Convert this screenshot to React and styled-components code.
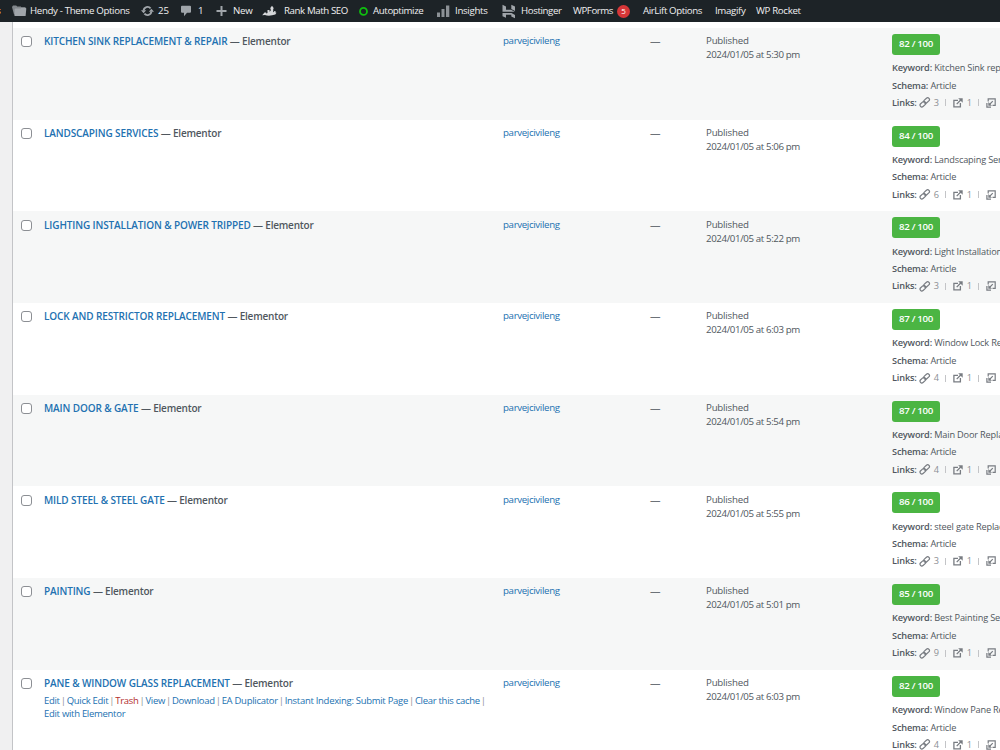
import React from 'react'
import styled, { createGlobalStyle } from 'styled-components'

const MENU = [
  { icon: 'folder', slot: 18, width: 129, text: 'Hendy - Theme Options' },
  { icon: 'update', slot: 17, width: 39, text: '25', ls: -0.1 },
  { icon: 'comment', slot: 18, width: 36, text: '1' },
  { icon: 'plus', slot: 17, width: 46, text: 'New', ls: -0.2 },
  { icon: 'rank', slot: 22, width: 97, text: 'Rank Math SEO', ls: -0.4 },
  { icon: 'circle', slot: 14, width: 78, text: 'Autoptimize', ls: -0.38 },
  { icon: 'bars', slot: 18, width: 65, text: 'Insights', ls: -0.3 },
  { icon: 'hostinger', slot: 19, width: 71, text: 'Hostinger', ls: -0.4 },
  { width: 70, text: 'WPForms', badge: '5', ls: -0.45 },
  { width: 72, text: 'AirLift Options', ls: -0.4 },
  { width: 41, text: 'Imagify', ls: -0.35 },
  { width: 60, text: 'WP Rocket', ls: -0.35 }
]

const PAGES = [
  { title: 'KITCHEN SINK REPLACEMENT & REPAIR', time: '5:30', score: 82, keyword: 'Kitchen Sink replacement', links: 3 },
  { title: 'LANDSCAPING SERVICES', time: '5:06', score: 84, keyword: 'Landscaping Services', links: 6 },
  { title: 'LIGHTING INSTALLATION & POWER TRIPPED', time: '5:22', score: 82, keyword: 'Light Installation', links: 3 },
  { title: 'LOCK AND RESTRICTOR REPLACEMENT', time: '6:03', score: 87, keyword: 'Window Lock Replacement', links: 4 },
  { title: 'MAIN DOOR & GATE', time: '5:54', score: 87, keyword: 'Main Door Replacement', links: 4 },
  { title: 'MILD STEEL & STEEL GATE', time: '5:55', score: 86, keyword: 'steel gate Replacement', links: 3 },
  { title: 'PAINTING', time: '5:01', score: 85, keyword: 'Best Painting Services', links: 9 },
  { title: 'PANE & WINDOW GLASS REPLACEMENT', time: '6:03', score: 82, keyword: 'Window Pane Replacement', links: 4, actions: true }
]

const ACTIONS = ['Edit', 'Quick Edit', 'Trash', 'View', 'Download', 'EA Duplicator', 'Instant Indexing: Submit Page', 'Clear this cache', 'Edit with Elementor']

const MenuIcon = ({ name }) => {
  if (name === 'folder') {
    return (
      <svg width="15" height="12" viewBox="0 0 15 12">
        <path d="M0 2 1 .6h3.200l1 1h3.600l.7.8h3.600v3L4 9.500H2z" fill="#82878c" />
        <path d="M2.600 4.600 3.400 3.400h5.200l.8-.8h4l.9 1L13.600 11H2.500z" fill="#a0a5aa" />
      </svg>
    )
  }
  if (name === 'update') {
    return (
      <svg width="13" height="12" viewBox="0 0 13 12" fill="none" stroke="#a0a5aa" strokeWidth="1.9">
        <path d="M2.600 5.500A4 4 0 0 1 9.600 3.300M10.400 6.500A4 4 0 0 1 3.400 8.700" />
        <path d="M0 5.200h5.200L2.600 8.200zM7.800 6.800h5.200l-2.600-3z" fill="#a0a5aa" stroke="none" />
      </svg>
    )
  }
  if (name === 'comment') {
    return (
      <svg width="12" height="12" viewBox="0 0 12 12" fill="#a0a5aa">
        <path d="M2 .8h8q1 0 1 1v5q0 1-1 1H7L4 11.3V7.8H2q-1 0-1-1v-5q0-1 1-1z" />
      </svg>
    )
  }
  if (name === 'plus') {
    return (
      <svg width="12" height="12" viewBox="0 0 12 12" stroke="#a0a5aa" strokeWidth="2">
        <path d="M5.500 1v10M.5 6h10" />
      </svg>
    )
  }
  if (name === 'rank') {
    return (
      <svg width="15" height="12" viewBox="0 0 15 12" fill="#d5d7d9">
        <path d="M.2 10.300 2.500 7.500h1.700v1l1.300-.6V5h2v1.800l1.200-1V3.400H7.900L10 .8l2 2.600h-.8v3.800l1-.4v-.9h1.300v1.700l1 .2-1.200 1.800c-3.500 1.300-8 1.500-10.300.5z" />
      </svg>
    )
  }
  if (name === 'circle') {
    return (
      <svg width="10" height="12" viewBox="0 0 10 12" fill="none" stroke="#0fbe0f" strokeWidth="1.8">
        <circle cx="4.500" cy="6.400" r="3.500" />
      </svg>
    )
  }
  if (name === 'bars') {
    return (
      <svg width="13" height="13" viewBox="0 0 13 13" fill="#8c9196">
        <path d="M0 7.500h3V12H0zM4.500 4h3v8h-3zM9 0.500h3.300V12H9z" />
      </svg>
    )
  }
  return (
    <svg width="14" height="15" viewBox="0 0 14 15" fill="#a0a5aa">
      <path d="M.5 0.700 4 2.600v3.200h5l3.800 2H.5zM9.300.700l3.700 1.900V7L9.300 5zM.5 9h9l3.500 2v3.300l-3.700-1.900v-1.600H4v3L.5 12.300z" />
    </svg>
  )
}

const ChainIcon = () => (
  <svg width="12" height="11" viewBox="0 0 12 11" fill="none" stroke="#787c82" strokeWidth="1.200">
    <rect x="4.400" y="1.700" width="6.400" height="3.600" rx="1.800" transform="rotate(-42 7.600 3.500)" />
    <rect x="0.700" y="5.400" width="6.400" height="3.600" rx="1.800" transform="rotate(-42 3.900 7.200)" />
  </svg>
)

const ExternalIcon = () => (
  <svg width="10" height="10" viewBox="0 0 10 10" fill="none" stroke="#787c82" strokeWidth="1.300">
    <path d="M5 2.400H.9v6.500h6.500V5M3.700 6.100 8 1.800" />
    <path d="M5.200.3h4.500v4.500z" fill="#787c82" stroke="none" />
  </svg>
)

const IncomingIcon = () => (
  <svg width="10" height="10" viewBox="0 0 10 10" fill="none" stroke="#787c82" strokeWidth="1.200">
    <path d="M2.200 3.400V.9h7v6.500H6.500M6.800 3.200 3.500 6.500M.9 5v4.100H5" />
    <path d="M2.300 4v3.700H6z" fill="#787c82" stroke="none" />
  </svg>
)

const PageRow = ({ page, striped }) => (
  <Row $striped={striped}>
    <Checkbox type="checkbox" />
    <TitleCell>
      <Title>
        <a>{page.title}</a> — Elementor
      </Title>
      {page.actions && (
        <Actions>
          {ACTIONS.map((action, i) => (
            <React.Fragment key={action}>
              <Action $danger={action === 'Trash'}>{action}</Action>
              {i < ACTIONS.length - 1 && <Pipe>|</Pipe>}
              {' '}
            </React.Fragment>
          ))}
        </Actions>
      )}
    </TitleCell>
    <Author>parvejcivileng</Author>
    <Dash>—</Dash>
    <DateCell>
      Published
      <Time>2024/01/05 at {page.time} pm</Time>
    </DateCell>
    <Seo>
      <Score>{page.score} / 100</Score>
      <SeoLine><b>Keyword:</b> {page.keyword}</SeoLine>
      <SeoLine><b>Schema:</b> Article</SeoLine>
      <Links>
        <b>Links:</b>
        <ChainIcon />
        <Count>{page.links}</Count>
        <Divider />
        <ExternalIcon />
        <Count>1</Count>
        <Divider />
        <IncomingIcon />
      </Links>
    </Seo>
  </Row>
)

const App = () => {
  return (
    <Screen>
      <GlobalStyle />
      <AdminBar>
        <Cut>s</Cut>
        {MENU.map(item => (
          <MenuItem key={item.text} $width={item.width}>
            {item.icon && (
              <Slot $width={item.slot}>
                <MenuIcon name={item.icon} />
              </Slot>
            )}
            <MenuText $ls={item.ls}>{item.text}</MenuText>
            {item.badge && <Badge>{item.badge}</Badge>}
          </MenuItem>
        ))}
      </AdminBar>
      <Content>
        <Table>
          {PAGES.map((page, i) => (
            <PageRow key={page.title} page={page} striped={i % 2 === 0} />
          ))}
        </Table>
      </Content>
    </Screen>
  )
}

export default App

const GlobalStyle = createGlobalStyle`
  * {
    box-sizing: border-box;
  }
  body {
    margin: 0;
    overflow: hidden;
    font-family: 'Open Sans', 'Noto Sans', sans-serif;
  }
`
const Screen = styled.div`
  display: flex;
  flex-direction: column;
  width: 1000px;
  height: 750px;
  overflow: hidden;
  background: #f0f0f1;
`
const AdminBar = styled.div`
  display: flex;
  flex: none;
  height: 22px;
  background: #1d2327;
  color: #f0f0f1;
  font-size: 9.7px;
  line-height: 22px;
  white-space: nowrap;
`
const Cut = styled.span`
  display: flex;
  justify-content: flex-end;
  width: 1px;
  margin-right: 11px;
  overflow: hidden;
  color: #f0a030;
`
const MenuItem = styled.div`
  display: flex;
  flex: none;
  align-items: center;
  width: ${({ $width }) => $width}px;
`
const Slot = styled.span`
  display: flex;
  flex: none;
  width: ${({ $width }) => $width}px;
`
const MenuText = styled.span`
  letter-spacing: ${({ $ls }) => $ls || -0.35}px;
`
const Badge = styled.span`
  width: 13px;
  height: 13px;
  margin-left: 4px;
  border-radius: 50%;
  background: #d63638;
  color: #fff;
  font-size: 8px;
  line-height: 12.500px;
  text-align: center;
`
const Content = styled.div`
  flex: 1;
  min-height: 0;
  padding-left: 12px;
`
const Table = styled.div`
  height: 100%;
  padding-top: 6px;
  border-left: 1px solid #c3c4c7;
  background: #fff;
  overflow: hidden;
`
const Row = styled.div`
  display: grid;
  grid-template-columns: 31px 459px 147px 56px 186px 108px;
  height: 91.7px;
  background: ${({ $striped }) => ($striped ? '#f6f7f7' : '#fff')};
  color: #50575e;
  font-size: 9.7px;
  line-height: 14px;
  white-space: nowrap;
`
const Checkbox = styled.input`
  appearance: none;
  width: 11px;
  height: 11px;
  margin: 8.300px 0 0 8px;
  border: 1px solid #8c8f94;
  border-radius: 3px;
  background: #fff;
`
const TitleCell = styled.div`
  padding-top: 6.300px;
`
const Title = styled.div`
  font-size: 10px;
  font-weight: 600;
  letter-spacing: -0.2px;

  a {
    color: #2271b1;
    letter-spacing: -0.12px;
  }
`
const Actions = styled.div`
  width: 450px;
  margin-top: 3.700px;
  color: #8c8f94;
  font-size: 9.500px;
  letter-spacing: -0.29px;
  line-height: 13.500px;
  white-space: normal;
`
const Action = styled.a`
  color: ${({ $danger }) => ($danger ? '#b32d2e' : '#2271b1')};
`
const Pipe = styled.span`
  margin: 0 -1.200px 0 1px;
`
const Author = styled.a`
  padding-top: 6.300px;
  color: #2271b1;
  letter-spacing: -0.34px;
`
const Dash = styled.div`
  padding-top: 6.300px;
  color: #6c7278;
  font-size: 10.500px;
`
const DateCell = styled.div`
  padding-top: 6.300px;
  letter-spacing: -0.2px;
`
const Time = styled.div`
  letter-spacing: -0.38px;
`
const Seo = styled.div`
  padding-top: 6px;
  overflow: hidden;
  font-size: 9.200px;
  letter-spacing: -0.17px;

  b {
    font-weight: 600;
  }
`
const Score = styled.div`
  width: 48px;
  height: 21px;
  margin-bottom: 4.200px;
  border-radius: 3px;
  background: #4bb543;
  color: #fff;
  font-size: 9.7px;
  font-weight: 600;
  line-height: 20.500px;
  text-align: center;
  letter-spacing: -0.3px;
`
const SeoLine = styled.div`
  height: 17.500px;
  line-height: 17.500px;
`
const Links = styled.div`
  display: flex;
  align-items: center;
  height: 17.500px;

  svg {
    flex: none;
    margin-left: 3px;
  }

  b + svg {
    margin-left: 2px;
    margin-right: -1px;
  }
`
const Count = styled.span`
  width: 11px;
  margin-left: 4px;
  color: #8c8f94;
`
const Divider = styled.i`
  width: 1px;
  height: 7px;
  margin-right: 4px;
  background: #c3c4c7;
`
